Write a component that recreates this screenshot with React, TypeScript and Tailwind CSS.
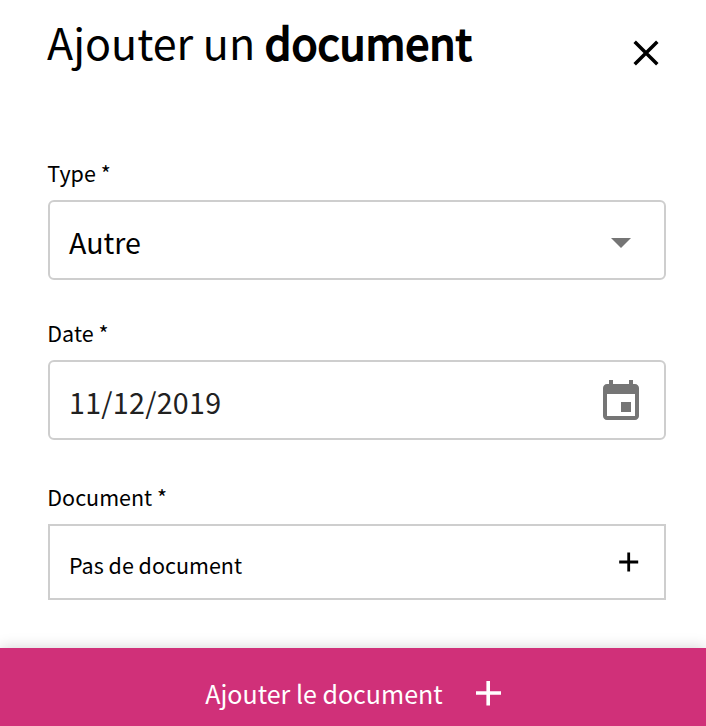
import type { ReactNode } from "react";

function Label({ children }: { children: ReactNode }) {
  return <label className="-ml-[0.7px] block h-[42px] text-[21.5px] leading-[30px] whitespace-nowrap">{children}</label>;
}

export default function App() {
  return (
    <main className="flex h-[726px] w-[706px] flex-col overflow-hidden bg-white font-['Noto_Sans_CJK_SC','Noto_Sans',sans-serif] text-black">
      <header className="flex h-[158px] items-start justify-between pt-[11px] pr-[46px] pl-[47px]">
        <h1 className="text-[43px] leading-[60px] whitespace-nowrap">
          Ajouter un <strong className="font-normal [-webkit-text-stroke:1.9px_black]">document</strong>
        </h1>
        <button aria-label="Fermer" className="mt-[28px]">
          <svg width="28" height="28" viewBox="0 0 28 28" fill="none" stroke="currentColor" strokeWidth="3.5">
            <path d="M2.7 2.7 25.3 25.3M25.3 2.7 2.7 25.3" />
          </svg>
        </button>
      </header>
      <section className="h-[160px] pr-10 pl-12">
        <Label>Type *</Label>
        <div className="flex h-20 items-center justify-between rounded-md border-2 border-[#cecece] pr-[33px] pl-[19px]">
          <span className="mt-[3px] text-[28.6px] leading-10">Autre</span>
          <svg className="mt-[6px]" width="20" height="10" viewBox="0 0 20 10" fill="#757575">
            <path d="M0 0h20L10 10z" />
          </svg>
        </div>
      </section>
      <section className="h-[164px] pr-10 pl-12">
        <Label>Date *</Label>
        <div className="flex h-20 items-center justify-between rounded-md border-2 border-[#cecece] pr-[19px] pl-[19px]">
          <span className="mt-[3px] text-[28.6px] leading-10 tracking-[0.3px] text-[#212121]">11/12/2019</span>
          <svg className="mt-1" width="48" height="48" viewBox="0 0 24 24" fill="#757575">
            <path d="M17 12h-5v5h5v-5zM16 1v2H8V1H6v2H5c-1.11 0-1.99.9-1.99 2L3 19c0 1.1.89 2 2 2h14c1.1 0 2-.9 2-2V5c0-1.1-.9-2-2-2h-1V1h-2zm3 18H5V8h14v11z" />
          </svg>
        </div>
      </section>
      <section className="h-[166px] pr-10 pl-12">
        <Label>Document *</Label>
        <div className="flex h-[76px] items-center justify-between border-2 border-[#cecece] pr-[25px] pl-[19px]">
          <span className="mt-[6px] text-[21.5px] leading-8">Pas de document</span>
          <svg width="20" height="20" viewBox="0 0 20 20" fill="none" stroke="currentColor" strokeWidth="2.8">
            <path d="M.2 10h19M9.7 .5v19" />
          </svg>
        </div>
      </section>
      <button className="flex h-[78px] w-full items-center justify-center gap-[33px] bg-[#d03079] text-white shadow-[0_0_14px_rgba(0,0,0,0.18)]">
        <span className="mt-[12px] text-[25px] leading-9 whitespace-nowrap">Ajouter le document</span>
        <svg className="mt-[12px]" width="25" height="25" viewBox="0 0 25 25" fill="none" stroke="currentColor" strokeWidth="3.6">
          <path d="M0 12h25M12.2 0v24.5" />
        </svg>
      </button>
    </main>
  );
}
